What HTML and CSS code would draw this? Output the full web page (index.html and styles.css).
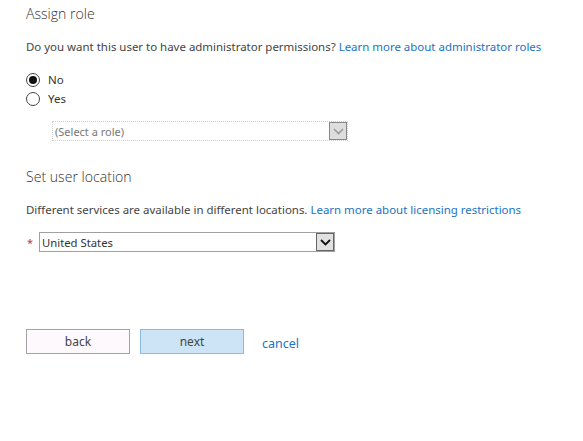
FILE: index.html
```html
<!DOCTYPE html>
<html>
<head>
<meta charset="utf-8">
<link rel="stylesheet" href="styles.css">
</head>
<body>
<div class="page">
  <section class="section">
    <h2 class="heading">Assign role</h2>
    <p class="desc">Do you want this user to have administrator permissions? <a class="link" href="#">Learn more about administrator roles</a></p>
    <div class="radios">
      <label class="radio"><span class="dot checked"></span><span>No</span></label>
      <label class="radio"><span class="dot"></span><span>Yes</span></label>
    </div>
    <div class="select disabled role-select">
      <span class="select-text">(Select a role)</span>
      <span class="arrow"><svg width="11" height="7" viewBox="0 0 11 7"><path d="M1 1 L5.5 5.5 L10 1" fill="none" stroke="#9a9a9a" stroke-width="1.6"/></svg></span>
    </div>
  </section>
  <section class="section loc">
    <h2 class="heading">Set user location</h2>
    <p class="desc">Different services are available in different locations. <a class="link" href="#">Learn more about licensing restrictions</a></p>
    <div class="loc-row">
      <span class="req">*</span>
      <div class="select country-select">
        <span class="select-text">United States</span>
        <span class="arrow"><svg width="11" height="7" viewBox="0 0 11 7"><path d="M1 1 L5.5 5.5 L10 1" fill="none" stroke="#111" stroke-width="1.8"/></svg></span>
      </div>
    </div>
  </section>
  <div class="actions">
    <button class="btn back">back</button>
    <button class="btn next">next</button>
    <a class="cancel" href="#">cancel</a>
  </div>
</div>
</body>
</html>
```
FILE: styles.css
```css
html, body { margin: 0; padding: 0; background: #fff; }
body { font-family: "Noto Sans", "Open Sans", sans-serif; color: #444; }
.page { padding: 4px 0 0 26px; }
.heading { margin: 0; font-family: "Open Sans", "Noto Sans", sans-serif; font-size: 14.1px; font-weight: 300; color: #333; line-height: 20px; }
.desc { margin: 15px 0 0; font-size: 11.46px; line-height: 16px; color: #444; }
.link { color: #1a73c4; text-decoration: none; }
.radios { margin-top: 15px; display: flex; flex-direction: column; }
.radio { display: flex; align-items: center; gap: 8px; font-size: 11.5px; height: 19px; color: #333; }
.dot { width: 12px; height: 12px; border: 1px solid #444; border-radius: 50%; box-sizing: content-box; display: flex; align-items: center; justify-content: center; background: #fff; }
.dot.checked::after { content: ""; width: 8px; height: 8px; border-radius: 50%; background: #111; }
.select { display: flex; align-items: center; justify-content: space-between; height: 18px; box-sizing: content-box; font-size: 11px; }
.select-text { padding-left: 2px; }
.role-select { margin: 13px 0 0 26px; width: 294px; border: 1px dotted #cfcfcf; color: #777; }
.role-select .arrow { width: 16px; height: 16px; border: 1px solid #888; background: #ddd; display: flex; align-items: center; justify-content: center; }
.loc { margin-top: 26px; }
.loc-row { margin-top: 14px; display: flex; align-items: center; }
.req { color: #c0392b; font-size: 11px; width: 12px; padding-left: 1px; }
.country-select { width: 294px; border: 1px solid #a0a0a0; color: #333; font-size: 11.3px; }
.country-select .arrow { width: 16px; height: 16px; border: 1px solid #666; background: #e1e1e1; display: flex; align-items: center; justify-content: center; }
.actions { margin-top: 77px; display: flex; align-items: center; }
.btn { font-family: inherit; font-size: 12px; width: 104px; height: 25px; color: #444; cursor: pointer; padding: 0; }
.back { background: #fdf9fd; border: 1px solid #a3a3a3; }
.next { margin-left: 10px; background: #cce4f5; border: 1px solid #86bde6; }
.cancel { margin-left: 18px; color: #1a73c4; text-decoration: none; font-size: 12.5px; padding-top: 3px; }
```
